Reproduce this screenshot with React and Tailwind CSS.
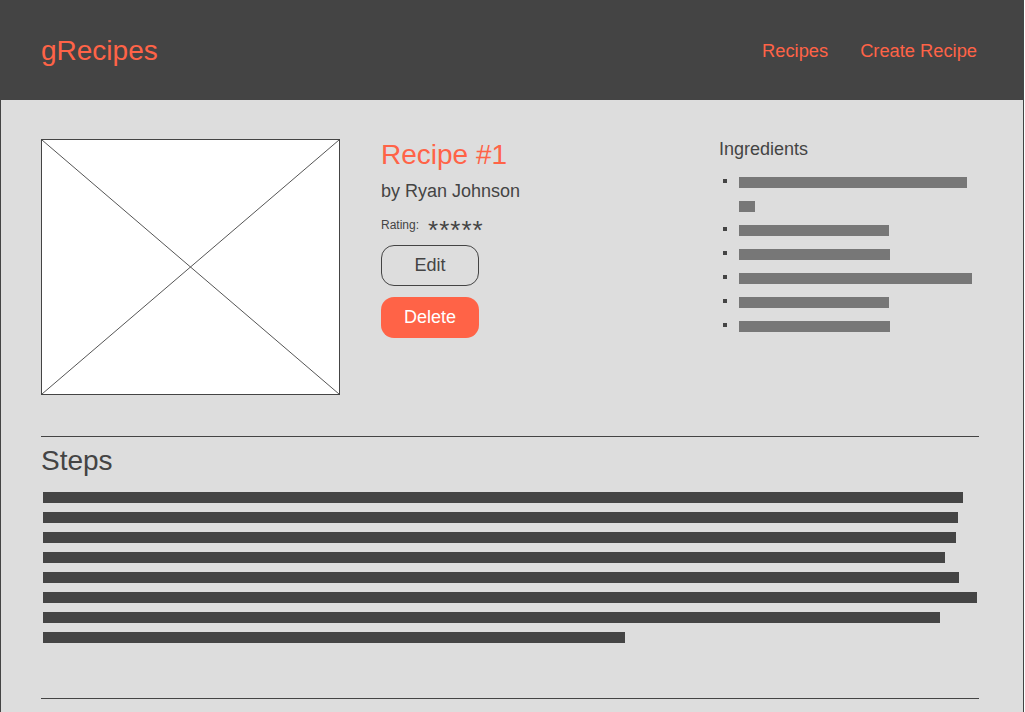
import React from "react";

const ingredients = [[228, 16], [150], [151], [233], [150], [151]];
const steps = [920, 915, 913, 902, 916, 934, 897, 582];

export default function App() {
  return (
    <div className="w-[1024px] min-h-[712px] bg-[#dddddd] text-[#444444]" style={{ fontFamily: "'Liberation Sans', Arial, sans-serif" }}>
      <header className="h-[100px] bg-[#444444] flex items-center justify-between pl-[41px] pr-[47px]">
        <div className="text-[28px] leading-none text-[#ff6347] mt-[2px]">gRecipes</div>
        <nav className="flex gap-[32px] text-[18.3px] leading-none text-[#ff6347] mt-[2px]">
          <span>Recipes</span>
          <span>Create Recipe</span>
        </nav>
      </header>
      <main className="border-x border-[#444444] min-h-[612px] pl-[40px] pr-[44px] pt-[39px]">
        <section className="flex">
          <div className="w-[299px] h-[256px] border border-[#444444] bg-white shrink-0">
            <svg width="297" height="254" viewBox="0 0 297 254" className="block">
              <line x1="0" y1="0" x2="297" y2="254" stroke="#555" strokeWidth="1" />
              <line x1="297" y1="0" x2="0" y2="254" stroke="#555" strokeWidth="1" />
            </svg>
          </div>
          <div className="ml-[41px] w-[297px] flex flex-col items-start">
            <h1 className="text-[28px] leading-[32px] text-[#ff6347] mt-[0px]">Recipe #1</h1>
            <div className="text-[18px] leading-[22px] mt-[9px]">by Ryan Johnson</div>
            <div className="flex items-center mt-[12px] h-[22px]">
              <span className="text-[12px]">Rating:</span>
              <span className="text-[26px] ml-[9px] leading-none mt-[10px] tracking-[1px]">*****</span>
            </div>
            <button className="mt-[9px] w-[98px] h-[41px] rounded-[13px] border border-[#444444] text-[18px] text-[#444444]">Edit</button>
            <button className="mt-[11px] w-[98px] h-[41px] rounded-[13px] bg-[#ff6347] text-[18px] text-white">Delete</button>
          </div>
          <div className="ml-[41px] flex-1">
            <h2 className="text-[18px] leading-[22px] mt-[-1px]">Ingredients</h2>
            <ul className="mt-[10px]">
              {ingredients.map((bars, i) => (
                <li key={i} className="flex">
                  <div className="w-[20px] h-[24px] flex items-center pl-[4px]">
                    <div className="w-[4px] h-[4px] bg-[#444444] mt-[-2px]" />
                  </div>
                  <div className="flex flex-col">
                    {bars.map((w, j) => (
                      <div key={j} className="h-[24px] flex items-center">
                        <div className="h-[11px] bg-[#777777]" style={{ width: w }} />
                      </div>
                    ))}
                  </div>
                </li>
              ))}
            </ul>
          </div>
        </section>
        <hr className="mt-[41px] border-0 border-t border-[#444444] w-[938px]" />
        <h2 className="text-[28px] leading-[34px] mt-[7px]">Steps</h2>
        <div className="mt-[14px] pl-[2px] flex flex-col gap-[9px]">
          {steps.map((w, i) => (
            <div key={i} className="h-[11px] bg-[#444444]" style={{ width: w }} />
          ))}
        </div>
        <hr className="mt-[55px] border-0 border-t border-[#444444] w-[938px]" />
      </main>
    </div>
  );
}
